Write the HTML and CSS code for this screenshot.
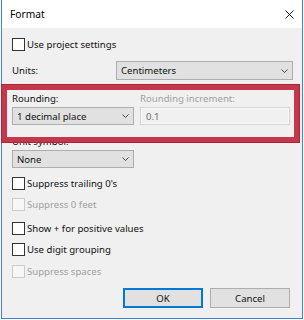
FILE: index.html
```html
<!DOCTYPE html>
<html>
<head>
<meta charset="utf-8">
<link rel="stylesheet" href="styles.css">
</head>
<body>
<div class="window">
  <div class="titlebar">
    <span class="title">Format</span>
    <svg class="close" width="9" height="9" viewBox="0 0 9 9"><path d="M0.5 0.5L8.5 8.5M8.5 0.5L0.5 8.5" stroke="#1a1a1a" stroke-width="1"/></svg>
  </div>
  <div class="content">
    <div class="check first"><span class="box"></span><span>Use project settings</span></div>
    <div class="units-row">
      <span class="label">Units:</span>
      <div class="select wide"><span>Centimeters</span><svg class="chev" width="7" height="4" viewBox="0 0 7 4"><path d="M0.5 0.5L3.5 3.5L6.5 0.5" fill="none" stroke="#444" stroke-width="1"/></svg></div>
    </div>
    <div class="rounding">
      <div class="col">
        <div class="label line">Rounding:</div>
        <div class="select narrow"><span>1 decimal place</span><svg class="chev" width="7" height="4" viewBox="0 0 7 4"><path d="M0.5 0.5L3.5 3.5L6.5 0.5" fill="none" stroke="#444" stroke-width="1"/></svg></div>
      </div>
      <div class="col grow">
        <div class="label line disabled">Rounding increment:</div>
        <div class="textbox"><span>0.1</span></div>
      </div>
    </div>
    <div class="label line symbol">Unit symbol:</div>
    <div class="select narrow"><span>None</span><svg class="chev" width="7" height="4" viewBox="0 0 7 4"><path d="M0.5 0.5L3.5 3.5L6.5 0.5" fill="none" stroke="#444" stroke-width="1"/></svg></div>
    <div class="check c1"><span class="box"></span><span>Suppress trailing 0's</span></div>
    <div class="check c2 off"><span class="box"></span><span>Suppress 0 feet</span></div>
    <div class="check c3"><span class="box"></span><span>Show + for positive values</span></div>
    <div class="check c4"><span class="box"></span><span>Use digit grouping</span></div>
    <div class="check c5 off"><span class="box"></span><span>Suppress spaces</span></div>
    <div class="buttons">
      <div class="btn default">OK</div>
      <div class="btn">Cancel</div>
    </div>
  </div>
  <div class="highlight"></div>
</div>
</body>
</html>
```
FILE: styles.css
```css
html, body {
  margin: 0;
  padding: 0;
  background: #ffffff;
}
body {
  font-family: "Noto Sans", "DejaVu Sans", sans-serif;
  font-size: 9.6px;
  color: #111;
}
.window {
  position: relative;
  margin-left: 1px;
  width: 302px;
  height: 319px;
  box-sizing: border-box;
  border: 1px solid #3b83d9;
  border-top: none;
  background: #f0f0f0;
  display: flex;
  flex-direction: column;
}
.titlebar {
  height: 28px;
  background: #ffffff;
  display: flex;
  align-items: center;
  justify-content: space-between;
  padding: 0 8px 0 8px;
  flex: none;
}
.title {
  font-size: 10.2px;
  color: #000;
}
.close {
  display: block;
}
.content {
  padding: 10px 0 0 10px;
  display: flex;
  flex-direction: column;
}
.check {
  display: flex;
  align-items: center;
  height: 13px;
  gap: 2px;
}
.box {
  width: 11px;
  height: 11px;
  border: 1px solid #333;
  background: #fff;
  flex: none;
}
.check.off {
  color: #a0a0a0;
}
.check.off .box {
  border-color: #cccccc;
  background: #f7f7f7;
}
.units-row {
  display: flex;
  align-items: center;
  justify-content: space-between;
  margin-top: 10px;
  width: 281px;
}
.select {
  height: 18px;
  box-sizing: border-box;
  background: #e1e1e1;
  border: 1px solid #adadad;
  display: flex;
  align-items: center;
  justify-content: space-between;
  padding: 0 4px 0 4px;
}
.select.wide {
  width: 177px;
  height: 19px;
}
.select.narrow {
  width: 122px;
  padding-left: 4px;
}
.chev {
  display: block;
}
.label {
  color: #111;
}
.line {
  height: 15px;
  line-height: 13px;
}
.disabled {
  color: #a0a0a0;
}
.rounding {
  display: flex;
  gap: 6px;
  margin-top: 12px;
  width: 278px;
}
.col {
  display: flex;
  flex-direction: column;
}
.col.grow {
  flex: 1;
}
.textbox {
  height: 18px;
  box-sizing: border-box;
  border: 1px solid #d4d4d4;
  box-shadow: inset 0 0 0 1px #fafafa;
  background: #f0f0f0;
  color: #6d6d6d;
  display: flex;
  align-items: center;
  padding-left: 5px;
}
.symbol {
  margin-top: 10px;
}
.c1 { margin-top: 9px; }
.c2 { margin-top: 8px; }
.c3 { margin-top: 11px; }
.c4 { margin-top: 8px; }
.c5 { margin-top: 9px; }
.buttons {
  display: flex;
  gap: 7px;
  margin-top: 10px;
  margin-left: 111px;
}
.btn {
  width: 80px;
  height: 20px;
  box-sizing: border-box;
  background: #e1e1e1;
  border: 1px solid #adadad;
  display: flex;
  align-items: center;
  justify-content: center;
}
.btn.default {
  border: 2px solid #0078d7;
}
.highlight {
  position: absolute;
  left: -1px;
  top: 84px;
  width: 299px;
  height: 59px;
  box-sizing: border-box;
  border: 6px solid #c4384b;
  outline: 1px solid #b5213a;
  outline-offset: -1px;
}
```
